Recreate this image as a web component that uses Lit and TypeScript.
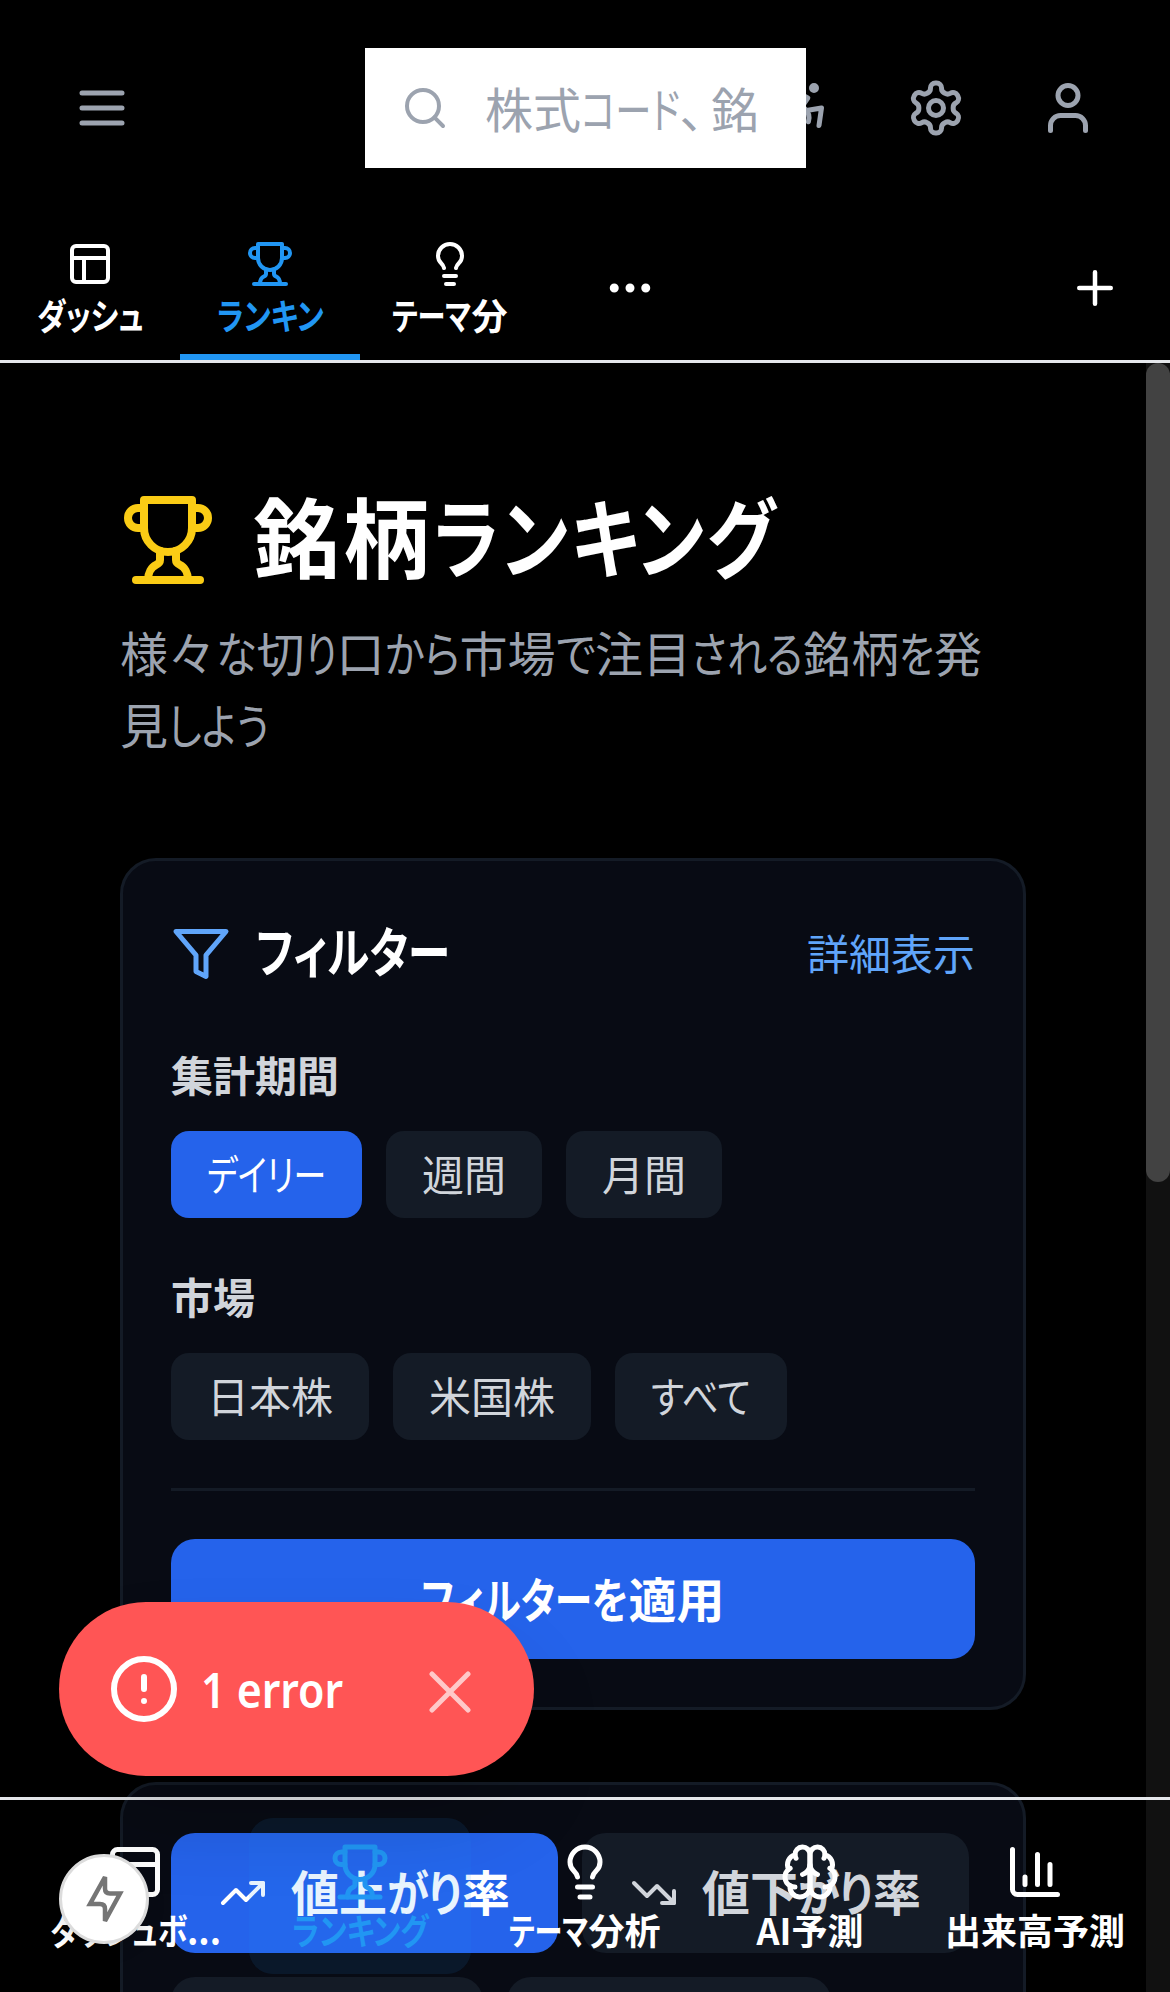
import { LitElement, html, css, svg } from "lit";
import { customElement, property, query } from "lit/decorators.js";
import { classMap } from "lit/directives/class-map.js";

const glyphs: Record<string, unknown> = {
  menu: svg`<path d="M4 6h16M4 12h16M4 18h16"/>`,
  search: svg`<circle cx="11" cy="11" r="8"/><path d="m21 21-4.3-4.3"/>`,
  access: svg`<circle cx="16" cy="4" r="1"/><path d="m18 19 1-7-6 1"/><path d="m5 8 3-3 5.5 3-2.36 3.5"/><path d="M4.24 14.5a5 5 0 0 0 6.88 6"/><path d="M13.76 17.5a5 5 0 0 0-6.88-6"/>`,
  settings: svg`<path d="M12.22 2h-.44a2 2 0 0 0-2 2v.18a2 2 0 0 1-1 1.73l-.43.25a2 2 0 0 1-2 0l-.15-.08a2 2 0 0 0-2.73.73l-.22.38a2 2 0 0 0 .73 2.73l.15.1a2 2 0 0 1 1 1.72v.51a2 2 0 0 1-1 1.74l-.15.09a2 2 0 0 0-.73 2.73l.22.38a2 2 0 0 0 2.73.73l.15-.08a2 2 0 0 1 2 0l.43.25a2 2 0 0 1 1 1.73V20a2 2 0 0 0 2 2h.44a2 2 0 0 0 2-2v-.18a2 2 0 0 1 1-1.73l.43-.25a2 2 0 0 1 2 0l.15.08a2 2 0 0 0 2.73-.73l.22-.39a2 2 0 0 0-.73-2.73l-.15-.08a2 2 0 0 1-1-1.74v-.5a2 2 0 0 1 1-1.74l.15-.09a2 2 0 0 0 .73-2.73l-.22-.38a2 2 0 0 0-2.73-.73l-.15.08a2 2 0 0 1-2 0l-.43-.25a2 2 0 0 1-1-1.73V4a2 2 0 0 0-2-2z"/><circle cx="12" cy="12" r="3"/>`,
  user: svg`<path d="M19 21v-2a4 4 0 0 0-4-4H9a4 4 0 0 0-4 4v2"/><circle cx="12" cy="7" r="4"/>`,
  layout: svg`<rect width="18" height="18" x="3" y="3" rx="2"/><path d="M3 9h18M9 21V9"/>`,
  trophy: svg`<path d="M6 9H4.5a2.5 2.5 0 0 1 0-5H6"/><path d="M18 9h1.5a2.5 2.5 0 0 0 0-5H18"/><path d="M4 22h16"/><path d="M10 14.66V17c0 .55-.47.98-.97 1.21C7.85 18.75 7 20.24 7 22"/><path d="M14 14.66V17c0 .55.47.98.97 1.21C16.15 18.75 17 20.24 17 22"/><path d="M18 2H6v7a6 6 0 0 0 12 0V2Z"/>`,
  bulb: svg`<path d="M15 14c.2-1 .7-1.7 1.5-2.5 1-.9 1.5-2.2 1.5-3.5A6 6 0 0 0 6 8c0 1 .2 2.2 1.5 3.5.7.7 1.3 1.5 1.5 2.5"/><path d="M9 18h6M10 22h4"/>`,
  more: svg`<circle cx="12" cy="12" r="1"/><circle cx="19" cy="12" r="1"/><circle cx="5" cy="12" r="1"/>`,
  plus: svg`<path d="M5 12h14M12 5v14"/>`,
  filter: svg`<polygon points="22 3 2 3 10 12.46 10 19 14 21 14 12.46 22 3"/>`,
  up: svg`<polyline points="22 7 13.5 15.5 8.5 10.5 2 17"/><polyline points="16 7 22 7 22 13"/>`,
  down: svg`<polyline points="22 17 13.5 8.5 8.5 13.5 2 7"/><polyline points="16 17 22 17 22 11"/>`,
  brain: svg`<path d="M12 5a3 3 0 1 0-5.997.125 4 4 0 0 0-2.526 5.77 4 4 0 0 0 .556 6.588A4 4 0 1 0 12 18Z"/><path d="M12 5a3 3 0 1 1 5.997.125 4 4 0 0 1 2.526 5.77 4 4 0 0 1-.556 6.588A4 4 0 1 1 12 18Z"/><path d="M15 13a4.5 4.5 0 0 1-3-4 4.5 4.5 0 0 1-3 4"/><path d="M17.599 6.5a3 3 0 0 0 .399-1.375"/><path d="M6.003 5.125A3 3 0 0 0 6.401 6.5"/><path d="M3.477 10.896a4 4 0 0 1 .585-.396"/><path d="M19.938 10.5a4 4 0 0 1 .585.396"/><path d="M6 18a4 4 0 0 1-1.967-.516"/><path d="M19.967 17.484A4 4 0 0 1 18 18"/>`,
  chart: svg`<path d="M3 3v16a2 2 0 0 0 2 2h16"/><path d="M18 17V9M13 17V5M8 17v-3"/>`,
};

const icon = (name: string, size: number) => html`<svg
  class="icon" width=${size} height=${size} viewBox="0 0 24 24" fill="none" stroke="currentColor"
  stroke-width="2" stroke-linecap="round" stroke-linejoin="round">${glyphs[name]}</svg>`;

/** A run of text condensed horizontally to a given advance width. */
@customElement("fit-text")
export class FitText extends LitElement {
  static styles = css`
    :host { display: inline-block; white-space: nowrap; font-feature-settings: "palt"; }
    .run { display: inline-block; transform-origin: 0 50%; }
  `;
  @property() text = "";
  @property({ type: Number }) advance = 0;
  @query(".run") run!: HTMLElement;

  updated() {
    this.style.width = `${this.advance}px`;
    const natural = this.run.offsetWidth;
    if (natural > 0) this.run.style.transform = `scaleX(${this.advance / natural})`;
  }
  render() {
    return html`<span class="run">${this.text}</span>`;
  }
}

type Run = string | [string, number];
/** Kanji stay at full width; kana runs carry their own condensed width. */
const runs = (parts: Run[]) =>
  parts.map((p) => (typeof p === "string" ? p : html`<fit-text .text=${p[0]} .advance=${p[1]}></fit-text>`));

interface Entry { icon: string; label: Run[]; active?: boolean }

const tabs: Entry[] = [
  { icon: "layout", label: [["ダッシュ", 107]] },
  { icon: "trophy", label: [["ランキン", 107]], active: true },
  { icon: "bulb", label: [["テーマ", 79], "分"] },
];

const navItems: Entry[] = [
  { icon: "layout", label: [["ダッシュボ", 137], ["...", 34]] },
  { icon: "trophy", label: [["ランキング", 137]], active: true },
  { icon: "bulb", label: [["テーマ", 79], "分析"] },
  { icon: "brain", label: ["AI予測"] },
  { icon: "chart", label: ["出来高予測"] },
];

@customElement("app-root")
export class AppRoot extends LitElement {
  static styles = css`
    :host {
      display: block;
      position: relative;
      width: 1170px;
      height: 1992px;
      overflow: hidden;
      background: #000;
      color: #fff;
      font-family: "Noto Sans CJK JP", "Noto Sans", sans-serif;
    }
    * { box-sizing: border-box; }
    .icon { display: block; flex: none; }
    button {
      font: inherit; color: inherit; background: none; border: 0; padding: 0; margin: 0;
      display: flex; align-items: center; justify-content: center; white-space: nowrap;
    }
    h1, h2, h3, p { margin: 0; }

    .page { display: flex; flex-direction: column; height: 1992px; }
    .header {
      height: 216px; flex: none; display: flex; justify-content: space-between;
      padding: 0 36px; align-items: center; position: relative; color: #9ca3af;
    }
    .header button { width: 132px; height: 132px; }
    .actions { display: flex; }
    .search {
      position: absolute; left: 365px; top: 48px; width: 441px; height: 120px;
      background: #fff; display: flex; align-items: center; padding: 0 36px;
      gap: 36px; font-size: 48px; white-space: nowrap;
    }
    .placeholder { padding-bottom: 2px; }
    .comma { display: inline-block; width: 31px; font-feature-settings: "palt"; }

    .tabs { height: 147px; flex: none; display: flex; border-bottom: 3px solid #e5e7eb; }
    .tab {
      width: 180px; height: 144px; flex-direction: column; justify-content: flex-start; gap: 2px;
      padding-top: 24px; font-size: 36px; font-weight: 700; line-height: 48px;
      border-bottom: 6px solid transparent;
    }
    .tab.active { color: #2196f3; border-bottom-color: #2196f3; }
    .tab.more, .tab.add { border: 0; padding: 0; justify-content: center; }
    .tab.add { width: 150px; margin-left: auto; }

    .scroll { flex: 1; min-height: 0; display: flex; overflow: hidden; }
    .content { width: 1146px; flex: none; padding: 123px 120px 0; }
    .track { width: 24px; background: #111; }
    .thumb { height: 819px; border-radius: 12px; background: #424242; }

    .title { display: flex; align-items: center; gap: 37px; height: 108px; color: #facc15; }
    .title h1 { font-size: 87px; letter-spacing: 3px; line-height: 108px; padding-bottom: 12px; font-weight: 700; color: #fff; white-space: nowrap; }
    .lead { margin-top: 21px; font-size: 48px; line-height: 72px; height: 147px; color: #9ca3af; white-space: nowrap; }

    .card { border: 3px solid #141b26; border-radius: 36px; background: #080b14; padding: 48px; }
    .filters { margin-top: 96px; height: 852px; }
    .cardhead { height: 90px; display: flex; align-items: center; color: #60a5fa; }
    .cardhead h2 { margin-left: 25px; font-size: 54px; font-weight: 700; color: #fff; line-height: 84px; padding-bottom: 8px; white-space: nowrap; }
    .cardhead button { margin-left: auto; font-size: 42px; padding-bottom: 6px; }
    .label { font-size: 42px; line-height: 60px; font-weight: 700; color: #d1d5db; }
    .group { margin-top: 45px; }
    .group + .group { margin-top: 48px; }
    .chips { display: flex; gap: 24px; margin-top: 27px; }
    .chip { height: 87px; padding: 0 36px 4px; border-radius: 18px; font-size: 42px; background: #141b26; color: #d1d5db; }
    .chip.on { background: #2563eb; color: #fff; }
    .rule { height: 3px; background: #141b26; margin-top: 48px; }
    .apply { width: 100%; height: 120px; margin-top: 48px; padding-bottom: 5px; border-radius: 24px; background: #2563eb; font-size: 48px; font-weight: 700; }

    .ranks { margin-top: 72px; display: flex; flex-wrap: wrap; gap: 24px; height: 400px; align-content: flex-start; }
    .rank { width: 387px; height: 120px; border-radius: 24px; gap: 24px; font-size: 48px; font-weight: 700; background: #141b26; color: #d1d5db; }
    .rank .name { padding-bottom: 6px; }
    .rank.on { background: #2563eb; color: #fff; }
    .rank.c { width: 312px; }
    .rank.d { width: 324px; }

    .nav {
      position: absolute; left: 0; right: 0; bottom: 0; height: 195px;
      border-top: 3px solid #e5e7eb; padding: 18px 24px; display: flex; gap: 3px;
    }
    .item {
      width: 222px; height: 156px; border-radius: 24px; flex-direction: column;
      justify-content: flex-start; padding-top: 24px;
      font-size: 36px; font-weight: 700; line-height: 54px;
    }
    .item.active { color: #2196f3; background: rgba(33, 150, 243, 0.1); }

    .toast {
      position: absolute; left: 59px; top: 1602px; width: 475px; height: 174px; border-radius: 87px;
      background: #ff5555; display: flex; align-items: center; padding-left: 52px;
      box-shadow: 0 48px 96px -24px rgba(0, 0, 0, 0.24);
      font-family: "Noto Sans", sans-serif; font-size: 48px; font-weight: 600;
    }
    .toast .msg { margin-left: 24px; }
    .toast .close { position: absolute; left: 370px; top: 69px; }
    .badge {
      position: absolute; left: 59px; top: 1854px; width: 90px; height: 90px; border-radius: 50%;
      background: #fff; border: 3px solid #dcdcdc; display: flex; align-items: center; justify-content: center;
      box-shadow: 0 6px 18px rgba(0, 0, 0, 0.12);
    }
  `;

  render() {
    return html`
      <div class="page">
        <header class="header">
          <button>${icon("menu", 60)}</button>
          <div class="actions">
            <button>${icon("access", 60)}</button>
            <button>${icon("settings", 60)}</button>
            <button>${icon("user", 60)}</button>
          </div>
          <div class="search">${icon("search", 48)}<span class="placeholder">${runs(["株式", ["コード", 99]])}<span class="comma">、</span>銘</span></div>
        </header>
        <nav class="tabs">
          ${tabs.map((t) => html`<button class=${classMap({ tab: true, active: !!t.active })}>
            ${icon(t.icon, 48)}<span>${runs(t.label)}</span></button>`)}
          <button class="tab more">${icon("more", 54)}</button>
          <button class="tab add">${icon("plus", 54)}</button>
        </nav>
        <div class="scroll">
          <main class="content">
            <div class="title">${icon("trophy", 96)}<h1>${runs(["銘柄", ["ランキング", 345]])}</h1></div>
            <p class="lead">${runs([
              "様々", ["な", 40.5], "切", ["り", 32], "口", ["から", 75], "市場", ["で", 39.5],
              "注目", ["される", 112], "銘柄", ["を", 35], "発",
            ])}<br />${runs(["見", ["しよう", 101]])}</p>
            <section class="card filters">
              <div class="cardhead">${icon("filter", 60)}<h2>${runs([["フィルター", 194]])}</h2><button>詳細表示</button></div>
              <div class="group">
                <h3 class="label">集計期間</h3>
                <div class="chips">
                  <button class="chip on">${runs([["デイリー", 119]])}</button>
                  <button class="chip">週間</button>
                  <button class="chip">月間</button>
                </div>
              </div>
              <div class="group">
                <h3 class="label">市場</h3>
                <div class="chips">
                  <button class="chip">日本株</button>
                  <button class="chip">米国株</button>
                  <button class="chip">${runs([["すべて", 100]])}</button>
                </div>
              </div>
              <div class="rule"></div>
              <button class="apply"><span>${runs([["フィルターを", 207], "適用"])}</span></button>
            </section>
            <section class="card ranks">
              <button class="rank on">${icon("up", 48)}<span class="name">${runs(["値上", ["がり", 75], "率"])}</span></button>
              <button class="rank">${icon("down", 48)}<span class="name">${runs(["値下", ["がり", 75], "率"])}</span></button>
              <div class="rank c"></div>
              <div class="rank d"></div>
            </section>
          </main>
          <div class="track"><div class="thumb"></div></div>
        </div>
      </div>
      <nav class="nav">
        ${navItems.map((n) => html`<button class=${classMap({ item: true, active: !!n.active })}>
          ${icon(n.icon, 60)}<span>${runs(n.label)}</span></button>`)}
      </nav>
      <div class="toast">
        <svg class="icon" width="66" height="66" viewBox="0 0 66 66" fill="none" stroke="#fff" stroke-width="6" stroke-linecap="round">
          <circle cx="33" cy="33" r="30" /><path d="M33 21v12M33 45v.01" />
        </svg>
        <span class="msg">${runs([["1 error", 142]])}</span>
        <svg class="icon close" width="42" height="42" viewBox="0 0 42 42" stroke="#ffc8c8" stroke-width="5" stroke-linecap="round">
          <path d="M3 3l36 36M39 3L3 39" />
        </svg>
      </div>
      <div class="badge">
        <svg class="icon" width="42" height="54" viewBox="0 0 42 54" fill="none" stroke="#757575" stroke-width="4.5" stroke-miterlimit="2.4">
          <path d="M22 5L7 32H17Q22 32 22 37V49L37 21.5H27Q22 21.5 22 16.500Z" />
        </svg>
      </div>
    `;
  }
}
